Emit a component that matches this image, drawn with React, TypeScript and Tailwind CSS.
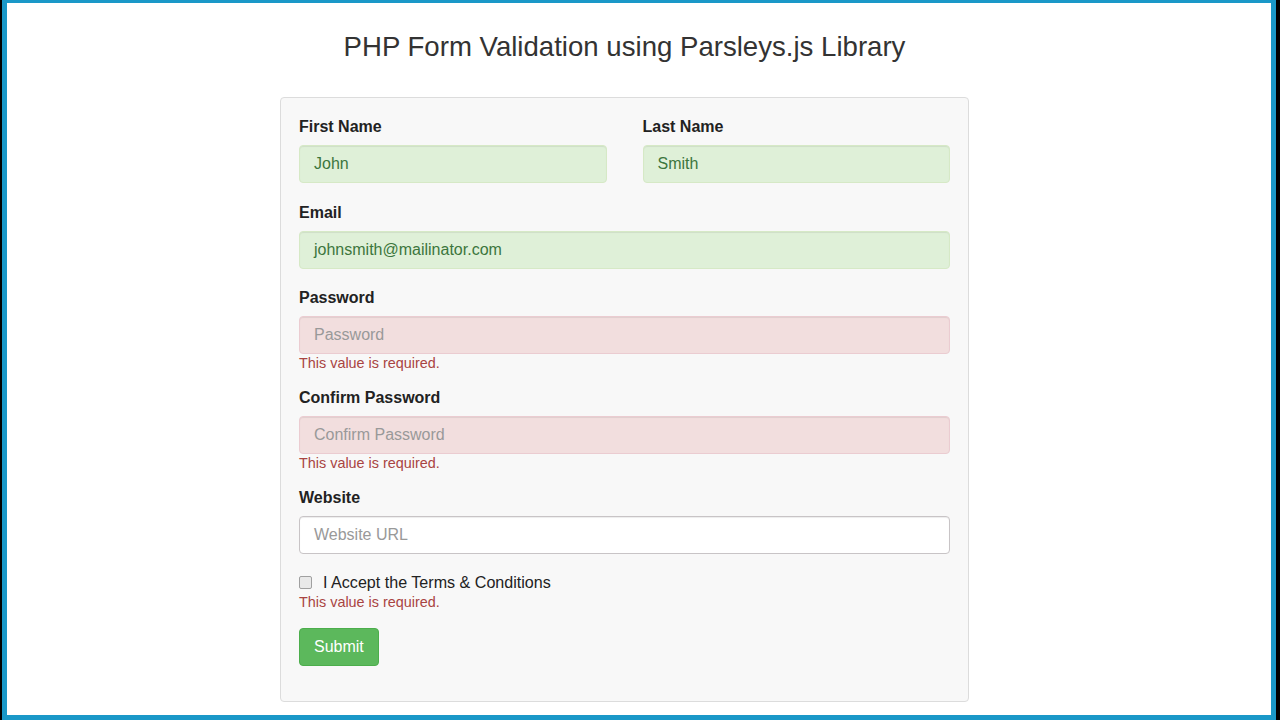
import React from 'react';

type Tone = 'success' | 'error' | 'plain';

const toneClasses: Record<Tone, string> = {
  success: 'bg-[#dff0d8] border-[#d6e9c6] text-[#3c763d]',
  error: 'bg-[#f2dede] border-[#ebccd1] text-[#a94442]',
  plain: 'bg-white border-[#c8c4c6] text-[#555555]',
};

const Field: React.FC<{
  label: string;
  value?: string;
  placeholder?: string;
  tone: Tone;
  error?: boolean;
  gap: string;
}> = ({ label, value, placeholder, tone, error, gap }) => (
  <div className={gap}>
    <div className="mb-[7px] pt-[1px] text-[16px] font-bold leading-[22px] text-[#222]">{label}</div>
    <div
      className={`flex h-[38px] items-center rounded-[4px] border px-[14px] text-[16px] shadow-[inset_0_1px_1px_rgba(0,0,0,0.075)] ${toneClasses[tone]}`}
    >
      {value ? <span>{value}</span> : <span className="text-[#999]">{placeholder}</span>}
    </div>
    {error && <div className="text-[14.4px] leading-[18px] text-[#a94442]">This value is required.</div>}
  </div>
);

export default function App() {
  return (
    <div className="h-[720px] w-[1280px] overflow-hidden bg-black pl-[2px] pr-[4px] font-['Liberation_Sans',Arial,sans-serif]">
      <div className="h-full border-b-[5px] border-l-[5px] border-r-[5px] border-t-[3px] border-[#1a98c8] bg-white">
        <div className="ml-[273px] w-[689px]">
          <h1 className="pt-[25px] text-center text-[27.6px] font-normal leading-[38px] text-[#333]">
            PHP Form Validation using Parsleys.js Library
          </h1>
          <div className="mt-[31px] rounded-[4px] border border-[#dcdcdc] bg-[#f8f8f8] px-[18px] pb-[35px] pt-[17px]">
            <div className="grid grid-cols-2 gap-x-[36px]">
              <Field label="First Name" value="John" tone="success" gap="mb-[18px]" />
              <Field label="Last Name" value="Smith" tone="success" gap="mb-[18px]" />
            </div>
            <Field label="Email" value="johnsmith@mailinator.com" tone="success" gap="mb-[17px]" />
            <Field label="Password" placeholder="Password" tone="error" error gap="mb-[14px]" />
            <Field label="Confirm Password" placeholder="Confirm Password" tone="error" error gap="mb-[14px]" />
            <Field label="Website" placeholder="Website URL" tone="plain" gap="mb-[17px]" />

            <div className="flex h-[22px] items-center gap-[11px] text-[16.1px] text-[#222]">
              <span className="h-[13px] w-[13px] rounded-[2px] border border-[#a0a0a0] bg-[#e9e9e9]" />
              <span>I Accept the Terms &amp; Conditions</span>
            </div>
            <div className="text-[14.4px] leading-[18px] text-[#a94442]">This value is required.</div>

            <button className="mt-[17px] h-[38px] rounded-[4px] border border-[#4cae4c] bg-[#5cb85c] px-[14px] text-[16px] text-white">
              Submit
            </button>
          </div>
        </div>
      </div>
    </div>
  );
}
